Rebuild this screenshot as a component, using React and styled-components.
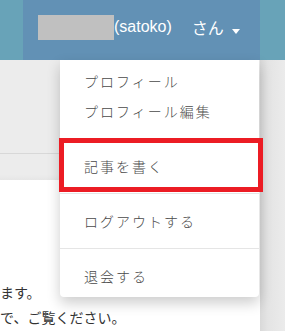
import React from "react";
import styled, { createGlobalStyle } from "styled-components";

const GlobalStyle = createGlobalStyle`
  html, body { margin: 0; padding: 0; }
  body {
    width: 285px;
    height: 331px;
    overflow: hidden;
    background: #ececec;
    font-family: "Liberation Sans", "Noto Sans CJK JP", sans-serif;
  }
`;

const Page = styled.div`
  width: 285px;
  height: 331px;
  display: flex;
  flex-direction: column;
  overflow: hidden;
`;

const Header = styled.header`
  height: 60px;
  flex: none;
  display: flex;
  padding-left: 23px;
  background: #68a3b8;
  position: relative;
  z-index: 2;
`;

const UserNav = styled.div`
  width: 237px;
  height: 100%;
  background: #6291b5;
  position: relative;
`;

const UserButton = styled.div`
  height: 100%;
  box-sizing: border-box;
  display: flex;
  align-items: center;
  padding: 0 0 6px 15px;
  color: #ffffff;
  font-size: 16px;
  line-height: 20px;
`;

const NameMask = styled.span`
  width: 76px;
  height: 25px;
  background: #c0c0c0;
  flex: none;
`;

const UserId = styled.span`
  font-family: "Liberation Sans", sans-serif;
  white-space: nowrap;
`;

const Honorific = styled.span`
  margin-left: 20px;
  font-family: "Noto Sans CJK JP", sans-serif;
  white-space: nowrap;
`;

const Caret = styled.span`
  margin: 9px 0 0 8px;
  width: 0;
  height: 0;
  border-left: 4px solid transparent;
  border-right: 4px solid transparent;
  border-top: 5px solid #ffffff;
`;

const Dropdown = styled.ul`
  position: absolute;
  top: 100%;
  right: 1px;
  width: 199px;
  margin: 0;
  padding: 6px 0;
  list-style: none;
  background: #ffffff;
  border-radius: 0 0 4px 4px;
  box-shadow: 0 6px 14px rgba(0, 0, 0, 0.2);
  font-family: "Noto Sans CJK JP", sans-serif;
`;

const MenuItem = styled.li`
  position: relative;
  padding: 0 24px;
  height: 30px;
  line-height: 30px;
  font-size: 14px;
  font-weight: 300;
  letter-spacing: 2px;
  color: #4a4a4a;
  white-space: nowrap;
`;

const Divider = styled.li`
  height: 1px;
  margin: 12px 0;
  background: #e5e5e5;
`;

const Highlight = styled.span`
  position: absolute;
  top: -13px;
  left: -1px;
  width: 204px;
  height: 54px;
  box-sizing: border-box;
  border: 5px solid #ec1c24;
  pointer-events: none;
`;

const Body = styled.div`
  flex: 1;
  display: flex;
`;

const Main = styled.main`
  width: 260px;
  display: flex;
  flex-direction: column;
  background: #ffffff;
`;

const SubNav = styled.div`
  height: 93px;
  background: #ececec;
  border-bottom: 1px solid #d8d8d8;
`;

const Band = styled.div`
  height: 26px;
  background: linear-gradient(#ececec, #ececec 80%, #e6e6e6);
`;

const Content = styled.div`
  flex: 1;
  padding-top: 100px;
  font-family: "Noto Sans CJK JP", sans-serif;
  font-size: 14px;
  line-height: 25px;
  color: #333333;
`;

const Line = styled.p`
  margin: 0;
  white-space: nowrap;
`;

const Side = styled.aside`
  flex: 1;
  background: linear-gradient(90deg, #d9d9d9 0, #e4e4e4 8px, #ebebeb 100%);
`;

export default function App() {
  return (
    <>
      <GlobalStyle />
      <Page>
        <Header>
          <UserNav>
            <UserButton>
              <NameMask />
              <UserId>(satoko)</UserId>
              <Honorific>さん</Honorific>
              <Caret />
            </UserButton>
            <Dropdown>
              <MenuItem>プロフィール</MenuItem>
              <MenuItem>プロフィール編集</MenuItem>
              <Divider />
              <MenuItem>
                記事を書く
                <Highlight />
              </MenuItem>
              <Divider />
              <MenuItem>ログアウトする</MenuItem>
              <Divider />
              <MenuItem>退会する</MenuItem>
            </Dropdown>
          </UserNav>
        </Header>
        <Body>
          <Main>
            <SubNav />
            <Band />
            <Content>
              <Line>ます。</Line>
              <Line>で、ご覧ください。</Line>
            </Content>
          </Main>
          <Side />
        </Body>
      </Page>
    </>
  );
}
